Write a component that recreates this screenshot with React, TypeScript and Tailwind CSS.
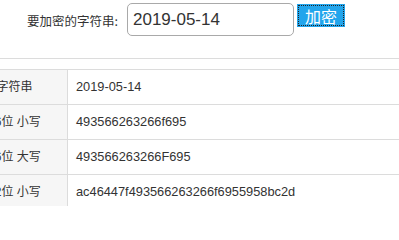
import React from "react";

const rows: [string, string][] = [
  ["字符串", "2019-05-14"],
  ["16位 小写", "493566263266f695"],
  ["16位 大写", "493566263266F695"],
  ["32位 小写", "ac46447f493566263266f6955958bc2d"],
];

export default function App() {
  return (
    <div className="w-[399px] h-[206px] overflow-hidden bg-white text-[#333] font-['Liberation_Sans','Noto_Sans_CJK_SC',sans-serif]">
      <div className="h-[58px] flex items-start pl-[27px] pt-[3px]">
        <span className="mt-[9px] text-[12.5px] leading-[17px] font-['Noto_Sans_CJK_SC',sans-serif] whitespace-nowrap">
          要加密的字符串:
        </span>
        <input
          readOnly
          value="2019-05-14"
          className="ml-[9px] w-[167px] h-[33px] border border-[#a9a9a9] rounded-[5px] pl-[5px] text-[17px] text-[#333] outline-none bg-white font-['Liberation_Sans',sans-serif]"
        />
        <button className="ml-[3px] mt-[1px] w-[48px] h-[23px] bg-[#22a5ec] text-white text-[16px] leading-none p-[2px] font-['Noto_Sans_CJK_SC',sans-serif]">
          <span className="flex items-center justify-center w-full h-full outline outline-1 outline-dotted outline-[#222]">
            加密
          </span>
        </button>
      </div>
      <div className="h-[11px] border-t border-[#dcdcdc]" />
      <div className="ml-[-38px] border-t border-[#dcdcdc]">
        {rows.map(([k, v]) => (
          <div key={k} className="grid grid-cols-[106px_1fr] h-[35px] border-b border-[#dcdcdc]">
            <div className="bg-[#f6f6f6] border-r border-[#dcdcdc] flex items-center justify-center whitespace-nowrap text-[12px]">
              {k}
            </div>
            <div className="flex items-center pl-[8px] whitespace-nowrap text-[12.8px]">{v}</div>
          </div>
        ))}
      </div>
    </div>
  );
}
